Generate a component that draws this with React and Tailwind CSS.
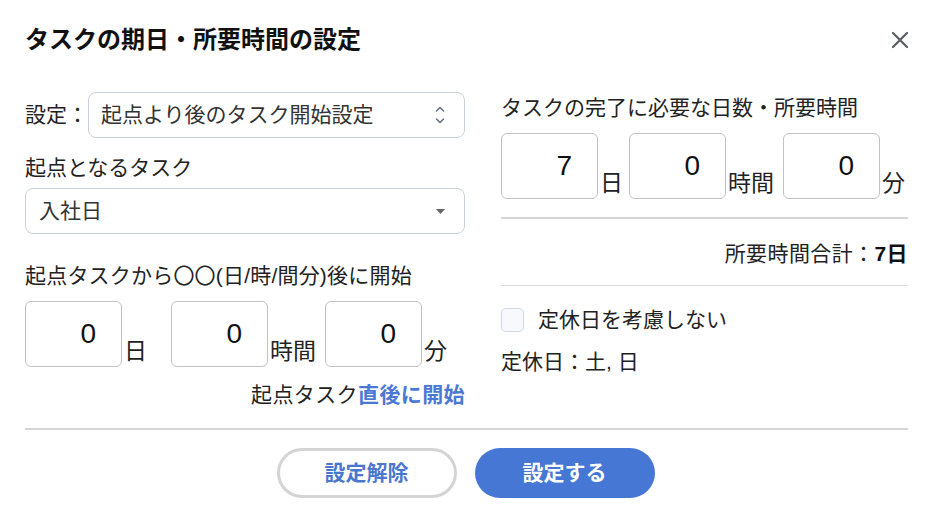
import React from 'react';

const NumBox = ({ value }) => (
  <div className="w-[97px] h-[66px] border border-[#c2c2c6] rounded-[6px] flex items-center justify-end pr-[25px] text-[28px] text-[#111]">
    {value}
  </div>
);

const Unit = ({ children, className = '' }) => (
  <span className={`ml-[2px] pb-[4px] text-[23px] leading-none text-[#222] ${className}`}>{children}</span>
);

const App = () => {
  return (
    <div className="w-[931px] h-[523px] bg-white font-['Liberation_Sans','Noto_Sans_CJK_JP',sans-serif] text-[#222]">
      {/* header */}
      <div className="flex items-center justify-between pl-[25px] pr-[23px] pt-[22px]">
        <h1 className="text-[24px] leading-[36px] font-bold text-[#111]">タスクの期日・所要時間の設定</h1>
        <button className="w-[20px] h-[20px] mr-[-2px] flex items-center justify-center text-[#5f6368]">
          <svg width="18" height="18" viewBox="0 0 18 18" fill="none" stroke="currentColor" strokeWidth="2.4" strokeLinecap="round">
            <path d="M2 2 L16 16 M16 2 L2 16" />
          </svg>
        </button>
      </div>

      {/* body */}
      <div className="flex pl-[25px] pr-[23px] mt-[34px]">
        {/* left column */}
        <div className="w-[440px] flex flex-col">
          <div className="flex items-center">
            <span className="text-[21px] leading-[30px] w-[63px]">設定：</span>
            <div className="flex-1 h-[46px] border border-[#c9d1dc] rounded-[8px] flex items-center justify-between pl-[12px] pr-[19px]">
              <span className="text-[21px] text-[#333]">起点より後のタスク開始設定</span>
              <svg width="10" height="20" viewBox="0 0 10 20" fill="none" stroke="#6b7280" strokeWidth="1.6" strokeLinecap="round" strokeLinejoin="round">
                <path d="M1.5 6 L5 2.5 L8.5 6" />
                <path d="M1.5 14 L5 17.5 L8.5 14" />
              </svg>
            </div>
          </div>

          <div className="mt-[15px] text-[21px] leading-[30px]">起点となるタスク</div>
          <div className="mt-[5px] h-[46px] border border-[#c9d1dc] rounded-[8px] flex items-center justify-between pl-[13px] pr-[19px]">
            <span className="text-[21px] text-[#333]">入社日</span>
            <svg width="9" height="5" viewBox="0 0 9 5" fill="#666">
              <path d="M0 0 L9 0 L4.5 5 Z" />
            </svg>
          </div>

          <div className="mt-[27px] text-[21px] leading-[30px] tracking-[0.2px]">起点タスクから〇〇(日/時/間分)後に開始</div>
          <div className="mt-[10px] flex items-end">
            <NumBox value="0" />
            <Unit className="mr-[24px]">日</Unit>
            <NumBox value="0" />
            <Unit className="mr-[9px]">時間</Unit>
            <NumBox value="0" />
            <Unit>分</Unit>
          </div>

          <div className="mt-[13px] text-right text-[21px] leading-[30px] tracking-[0.4px]">
            起点タスク<span className="font-bold text-[#4a78d4]">直後に開始</span>
          </div>
        </div>

        {/* right column */}
        <div className="ml-auto w-[407px] flex flex-col">
          <div className="mt-[1px] text-[21px] leading-[30px]">タスクの完了に必要な日数・所要時間</div>
          <div className="mt-[10px] flex items-end">
            <NumBox value="7" />
            <Unit className="mr-[6px]">日</Unit>
            <NumBox value="0" />
            <Unit className="mr-[9px]">時間</Unit>
            <NumBox value="0" />
            <Unit>分</Unit>
          </div>
          <div className="mt-[18px] h-[2px] bg-[#d6d6d6]" />
          <div className="mt-[20px] text-right text-[21px] leading-[30px] tracking-[0.4px]">
            所要時間合計：<span className="font-bold text-[#111]">7日</span>
          </div>
          <div className="mt-[16px] h-px bg-[#dcdcdc]" />
          <label className="mt-[22px] flex items-center">
            <span className="w-[23px] h-[24px] rounded-[5px] border border-[#cfd8e3] bg-[#f7f9fc]" />
            <span className="ml-[14px] text-[21px] leading-[24px]">定休日を考慮しない</span>
          </label>
          <div className="mt-[15px] text-[21px] leading-[30px]">定休日：土, 日</div>
        </div>
      </div>

      {/* footer */}
      <div className="ml-[25px] mr-[23px] mt-[18px] h-[2px] bg-[#d6d6d6]" />
      <div className="mt-[18px] flex justify-center gap-[18px]">
        <button className="w-[180px] h-[50px] rounded-full border-[3px] border-[#d4d4d4] text-[21px] font-bold text-[#4a76d0]">
          設定解除
        </button>
        <button className="w-[180px] h-[50px] rounded-full bg-[#4677d4] text-[21px] font-bold text-white">
          設定する
        </button>
      </div>
    </div>
  );
};

export default App;
